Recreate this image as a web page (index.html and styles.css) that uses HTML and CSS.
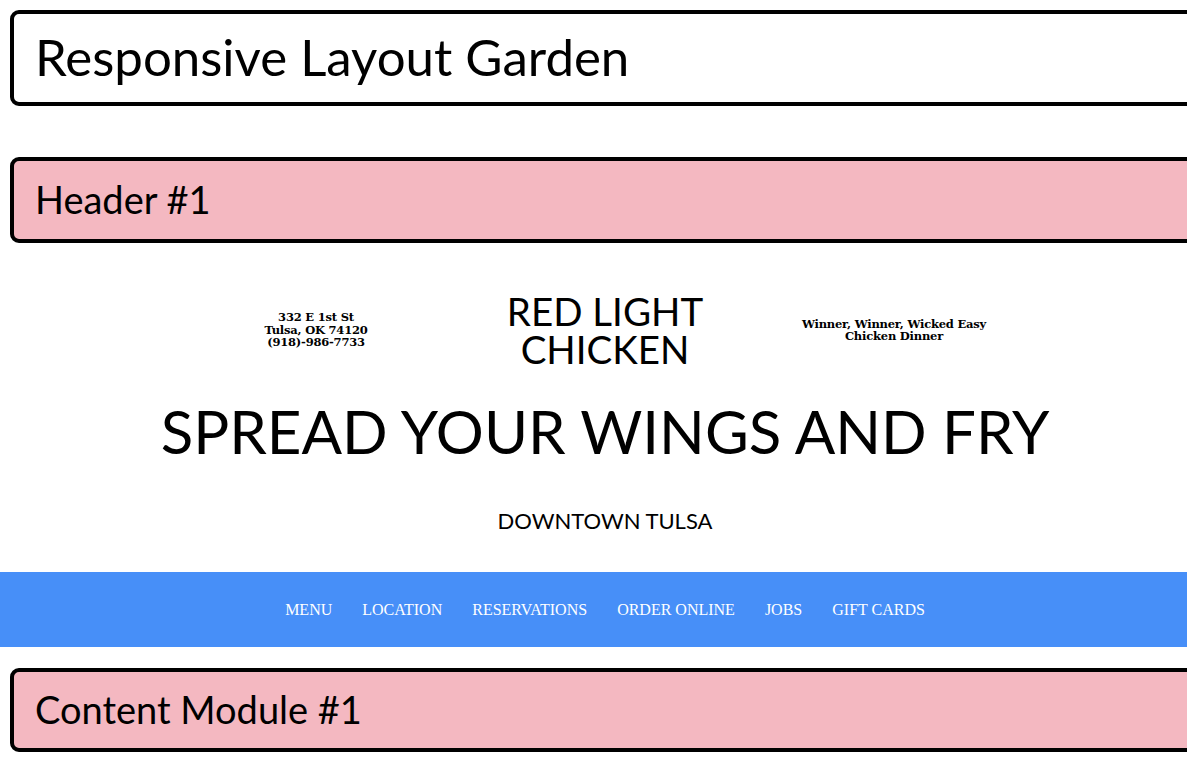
FILE: index.html
```html
<!DOCTYPE html>
<html lang="en">
<head>
<meta charset="utf-8">
<title>Responsive Layout Garden</title>
<link rel="stylesheet" href="styles.css">
</head>
<body>
<div class="page">
  <div class="box box-title"><h1 class="box-text title-text">Responsive Layout Garden</h1></div>
  <div class="box box-pink box-section"><h2 class="box-text section-text">Header #1</h2></div>

  <header class="site-header">
    <div class="brand-row">
      <div class="side-text">332 E 1st St<br>Tulsa, OK 74120<br>(918)-986-7733</div>
      <div class="brand">RED LIGHT<br>CHICKEN</div>
      <div class="side-text">Winner, Winner, Wicked Easy<br>Chicken Dinner</div>
    </div>
    <div class="tagline">SPREAD YOUR WINGS AND FRY</div>
    <div class="location">DOWNTOWN TULSA</div>
  </header>

  <nav class="nav">
    <a class="nav-link" href="#">MENU</a>
    <a class="nav-link" href="#">LOCATION</a>
    <a class="nav-link" href="#">RESERVATIONS</a>
    <a class="nav-link" href="#">ORDER ONLINE</a>
    <a class="nav-link" href="#">JOBS</a>
    <a class="nav-link" href="#">GIFT CARDS</a>
  </nav>

  <div class="box box-pink box-section box-content"><h2 class="box-text section-text">Content Module #1</h2></div>
</div>
</body>
</html>
```
FILE: styles.css
```css
html, body {
  margin: 0;
  padding: 0;
  background: #ffffff;
}

body {
  font-family: Lato, "Noto Sans", sans-serif;
  color: #000;
  overflow: hidden;
}

.page {
  width: 1210px;
  padding-top: 10px;
}

.box {
  margin: 0 10px;
  border: 4px solid #000;
  border-radius: 9px;
  box-sizing: border-box;
  display: flex;
  align-items: center;
  padding-left: 21px;
}

.box-title {
  height: 96px;
  background: #fff;
}

.box-pink {
  background: #f4b8c1;
}

.box-section {
  height: 86px;
  margin-top: 51px;
}

.box-content {
  margin-top: 21px;
  height: 84px;
}

.box-text {
  margin: 0;
  font-weight: 400;
  line-height: 1;
}

.title-text {
  font-size: 51px;
  margin-top: -3px;
}

.section-text {
  font-size: 38px;
  margin-top: -2px;
}

.site-header {
  padding-top: 49px;
  text-align: center;
}

.brand-row {
  width: 867px;
  margin: 0 auto;
  display: grid;
  grid-template-columns: 1fr 1fr 1fr;
  align-items: center;
}

.side-text {
  font-family: "DejaVu Serif", "Liberation Serif", serif;
  font-weight: 700;
  font-size: 11.5px;
  line-height: 12.5px;
  letter-spacing: -0.2px;
}

.brand {
  font-size: 38.5px;
  line-height: 38px;
}

.tagline {
  font-size: 60px;
  line-height: 1;
  margin-top: 33px;
}

.location {
  font-size: 22px;
  line-height: 1;
  margin-top: 49px;
  padding-bottom: 40px;
}

.nav {
  height: 75px;
  background: #478ff8;
  display: flex;
  justify-content: center;
  align-items: center;
}

.nav-link {
  font-family: "Liberation Serif", "Times New Roman", serif;
  font-size: 16px;
  color: #fff;
  text-decoration: none;
  padding: 0 15px;
}
```
